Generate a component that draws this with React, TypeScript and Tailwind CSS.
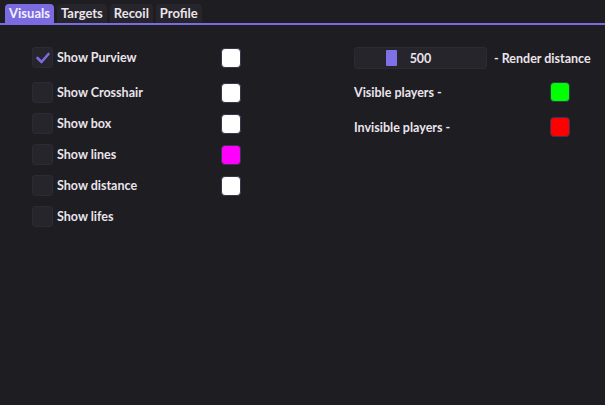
import React from "react";

const rows = [
  { label: "Show Purview", checked: true, color: "#ffffff" },
  { label: "Show Crosshair", checked: false, color: "#ffffff" },
  { label: "Show box", checked: false, color: "#ffffff" },
  { label: "Show lines", checked: false, color: "#ff00ff" },
  { label: "Show distance", checked: false, color: "#ffffff" },
  { label: "Show lifes", checked: false, color: null },
];

const tabs = ["Visuals", "Targets", "Recoil", "Profile"];

function Checkbox({ checked }: { checked: boolean }) {
  return (
    <div className="flex h-[21px] w-[21px] shrink-0 items-center justify-center rounded-[3px] border border-[#2c2a32] bg-[#25252b]">
      {checked && (
        <svg width="16" height="16" viewBox="0 0 16 16">
          <path d="M2.5 8 L6.5 12 L13.5 4" fill="none" stroke="#7b6be0" strokeWidth="2.6" strokeLinecap="round" strokeLinejoin="round" />
        </svg>
      )}
    </div>
  );
}

function Swatch({ color }: { color: string }) {
  return <div className="h-[20px] w-[20px] shrink-0 rounded-[4px] border border-[#3a3450]" style={{ backgroundColor: color }} />;
}

export default function App() {
  return (
    <div className="h-[405px] w-[605px] overflow-hidden bg-[#1d1d22] text-[12.5px] font-bold text-[#ebe4ec]" style={{ fontFamily: 'Lato, sans-serif' }}>
      <div className="flex gap-[3px] border-b-2 border-[#7b6be0] pl-[5px] pt-[4px] text-[13px]">
        {tabs.map((t, i) => (
          <div
            key={t}
            className={`flex h-[19px] items-center rounded-t-[4px] px-[4px] pt-[1px] ${i === 0 ? "bg-[#7b6be0] text-[#f4efff]" : "bg-[#26252b]"}`}
          >
            {t}
          </div>
        ))}
      </div>

      <div className="flex pt-[22px]">
        <div className="ml-[32px] flex w-[209px] flex-col">
          {rows.map((r, i) => (
            <div key={r.label} className={`flex items-center ${i === 0 ? "mb-[14px]" : "mb-[10px]"}`}>
              <Checkbox checked={r.checked} />
              <span className="ml-[4px] flex-1 whitespace-nowrap pt-[2px]">{r.label}</span>
              {r.color && <Swatch color={r.color} />}
            </div>
          ))}
        </div>

        <div className="ml-[113px] flex w-[236px] flex-col">
          <div className="flex items-center whitespace-nowrap">
            <div className="relative flex h-[22px] w-[133px] shrink-0 items-center justify-center rounded-[3px] border border-[#2c2a32] bg-[#25252b]">
              <div className="absolute left-[31px] top-[2px] h-[16px] w-[11px] rounded-[1px] bg-[#8070e8]" />
              <span className="relative pt-[2px]">500</span>
            </div>
            <span className="ml-[7px] pt-[2px]">- Render distance</span>
          </div>
          <div className="mt-[13px] flex items-center justify-between pr-[20px] whitespace-nowrap">
            <span className="pt-[2px]">Visible players -</span>
            <Swatch color="#00ff00" />
          </div>
          <div className="mt-[14px] flex items-center justify-between pr-[20px] whitespace-nowrap">
            <span className="pt-[2px]">Invisible players -</span>
            <Swatch color="#ff0000" />
          </div>
        </div>
      </div>
    </div>
  );
}
